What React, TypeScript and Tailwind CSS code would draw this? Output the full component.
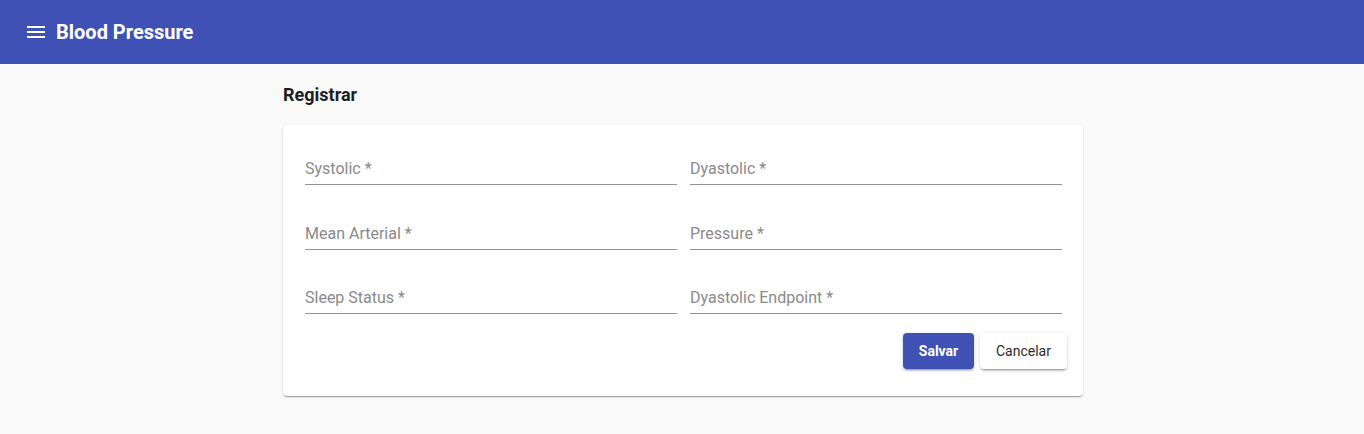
const fields = [
  ['Systolic *', 'Dyastolic *'],
  ['Mean Arterial *', 'Pressure *'],
  ['Sleep Status *', 'Dyastolic Endpoint *'],
]

function Field({ label }: { label: string }) {
  return (
    <div className="h-12 flex items-end border-b border-[#949494] pb-[3px]">
      <span className="text-base leading-6 text-[#8a8a8a]">{label}</span>
    </div>
  )
}

export default function App() {
  return (
    <div className="min-h-screen bg-[#fafafa] font-['Roboto',sans-serif]">
      {/* Toolbar */}
      <header className="h-16 bg-[#3f51b5] flex items-center px-6 gap-2 text-white">
        <svg viewBox="0 0 24 24" className="w-6 h-6 fill-white">
          <path d="M3 18h18v-2H3v2zm0-5h18v-2H3v2zm0-7v2h18V6H3z" />
        </svg>
        <h1 className="text-xl font-bold">Blood Pressure</h1>
      </header>

      <div className="pl-[2px]">
        <main className="w-[800px] mx-auto">
          <h2 className="mt-[15px] mb-[14px] text-lg leading-8 font-bold text-[#1f1f1f]">Registrar</h2>

          <div className="bg-white rounded shadow-[0px_2px_1px_-1px_rgba(0,0,0,0.2),0px_1px_1px_0px_rgba(0,0,0,0.14),0px_1px_3px_0px_rgba(0,0,0,0.12)] pt-3 pb-[27px] pl-[22px] pr-4">
            <div className="grid grid-cols-2 gap-x-[13px] gap-y-[16.5px] pr-[5px]">
              {fields.flat().map((f) => (
                <Field key={f} label={f} />
              ))}
            </div>
            <div className="flex justify-end gap-1.5 mt-[19px]">
              <button className="h-9 w-[71px] rounded bg-[#3f51b5] text-white text-sm font-bold shadow-[0px_3px_1px_-2px_rgba(0,0,0,0.2),0px_2px_2px_0px_rgba(0,0,0,0.14),0px_1px_5px_0px_rgba(0,0,0,0.12)]">
                Salvar
              </button>
              <button className="h-9 w-[87px] rounded bg-white text-[#2b2b2b] text-sm shadow-[0px_3px_1px_-2px_rgba(0,0,0,0.2),0px_2px_2px_0px_rgba(0,0,0,0.14),0px_1px_5px_0px_rgba(0,0,0,0.12)]">
                Cancelar
              </button>
            </div>
          </div>
        </main>
      </div>
    </div>
  )
}
